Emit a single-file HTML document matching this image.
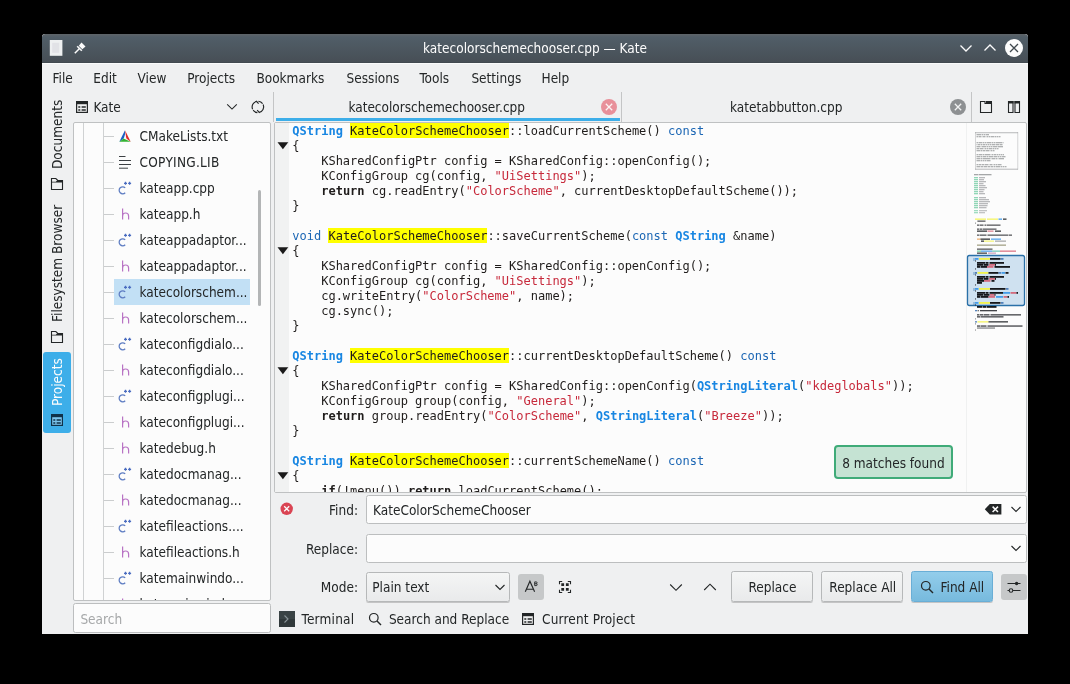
<!DOCTYPE html>
<html><head><meta charset="utf-8"><title>Kate</title><style>
*{box-sizing:border-box;margin:0;padding:0}
html,body{width:1070px;height:684px;overflow:hidden;background:#000}
body{position:relative;font-family:"DejaVu Sans Condensed","Liberation Sans","DejaVu Sans",sans-serif;font-size:13.5px;color:#232627}
#root{position:absolute;left:0;top:0;width:1070px;height:684px;will-change:transform}
.a{position:absolute}
.t{position:absolute;white-space:nowrap;line-height:20px;height:20px}
#win{left:42px;top:34px;width:986px;height:600px;background:#eff0f1;border-radius:3px 3px 0 0;overflow:hidden}
#tb{left:0;top:0;width:986px;height:29px;background:linear-gradient(#5e6468 0,#5a6268 1px,#515e68 3px,#474f56 27.5px,#3f474d 29px);border-radius:3px 3px 0 0}
.code{position:absolute;left:292px;white-space:pre;font-family:"DejaVu Sans Mono","Liberation Mono",monospace;font-size:12px;line-height:15px;height:15px;color:#1f1c1b}
.code b{font-weight:bold}
.ty{color:#1886e2;font-weight:bold}
.kw{color:#1b66b4}
.st{color:#c7293b}
.hl{}
.hb{position:absolute;height:15px;background:#ffff00}
.row{position:absolute;left:139.5px;white-space:nowrap;height:26px;line-height:26px}
.br{position:absolute;left:104px;width:10px;height:1px;background:#cbcdce}
.btn{position:absolute;border:1px solid #b6b8b9;border-radius:2.5px;background:linear-gradient(#f4f5f5,#e9eaeb);box-shadow:0 1px 0 rgba(0,0,0,.18)}
.inp{position:absolute;border:1px solid #bcbebf;border-radius:2.5px;background:#fcfcfc}
</style></head><body>
<div id="root">
<div id="win" class="a"><div id="tb" class="a"></div><div class="a" style="left:0;top:29px;width:986px;height:1px;background:#f9fafa"></div></div>
<div class="t" style="left:335px;width:400px;text-align:center;top:38px;color:#fcfcfc">katecolorschemechooser.cpp — Kate</div>
<svg class="a" style="left:49px;top:39px" width="16" height="18" viewBox="0 0 16 18"><rect x="0.8" y="1" width="12.6" height="15.8" fill="#eef0f1"/><rect x="3.2" y="3.8" width="7" height="10" fill="#e1e2e6"/></svg>
<svg class="a" style="left:72px;top:40px" width="16" height="16" viewBox="0 0 16 16"><path d="M9.5 2.5 L13.5 6.5 L10.3 9.2 L6.8 5.7 Z" fill="#fcfcfc"/><path d="M5.2 6.2 L9.8 10.8" stroke="#fcfcfc" stroke-width="1.6"/><path d="M7.5 8.5 L2.8 13.2" stroke="#fcfcfc" stroke-width="1.5"/></svg>
<svg class="a" style="left:956px;top:38px" width="70" height="20" viewBox="0 0 70 20"><path d="M4.5 7.5 L10 13 L15.5 7.5" fill="none" stroke="#fcfcfc" stroke-width="1.3"/><path d="M28.5 12.5 L34 7 L39.5 12.5" fill="none" stroke="#fcfcfc" stroke-width="1.3"/><circle cx="58" cy="10" r="9" fill="#fcfcfc"/><path d="M54 6 L62 14 M62 6 L54 14" stroke="#3f474d" stroke-width="1.3"/></svg>
<div class="t" style="left:52.6px;top:68px">File</div>
<div class="t" style="left:93.3px;top:68px">Edit</div>
<div class="t" style="left:137.6px;top:68px">View</div>
<div class="t" style="left:187.2px;top:68px">Projects</div>
<div class="t" style="left:256.4px;top:68px">Bookmarks</div>
<div class="t" style="left:346.6px;top:68px">Sessions</div>
<div class="t" style="left:419.5px;top:68px">Tools</div>
<div class="t" style="left:471.4px;top:68px">Settings</div>
<div class="t" style="left:541.5px;top:68px">Help</div>
<div class="a" style="left:43px;top:352px;width:28px;height:81px;background:#3daee9;border-radius:3px"></div>
<div class="t" style="left:57px;top:169px;transform-origin:0 0;transform:rotate(-90deg) translateY(-10px);color:#232627">Documents</div>
<div class="t" style="left:57px;top:321.5px;transform-origin:0 0;transform:rotate(-90deg) translateY(-10px);color:#232627">Filesystem Browser</div>
<div class="t" style="left:57px;top:405.5px;transform-origin:0 0;transform:rotate(-90deg) translateY(-10px);color:#fcfcfc">Projects</div>
<svg class="a" style="left:49px;top:176px" width="16" height="16" viewBox="0 0 16 16"><path d="M2.5 2.5 H6.8 L8.8 4.5 H13.5 V13.5 H2.5 Z" fill="none" stroke="#232627" stroke-width="1.1"/><path d="M8.6 4 H14 V6.6 H2 V5.8 H6.8 Z" fill="#232627"/></svg>
<svg class="a" style="left:49px;top:329px" width="16" height="16" viewBox="0 0 16 16"><path d="M2.5 2.5 H6.8 L8.8 4.5 H13.5 V13.5 H2.5 Z" fill="none" stroke="#232627" stroke-width="1.1"/><path d="M8.6 4 H14 V6.6 H2 V5.8 H6.8 Z" fill="#232627"/></svg>
<svg class="a" style="left:49px;top:412px" width="16" height="16" viewBox="0 0 16 16"><rect x="2.6" y="2.6" width="10.8" height="10.8" fill="#7cc4ec" stroke="#10324a" stroke-width="1.2"/><rect x="2" y="2" width="12" height="3.2" fill="#10324a"/><path d="M4.3 8h2M7.6 8h4.2M4.3 11h2M7.6 11h4.2" stroke="#10324a" stroke-width="1.5"/></svg>
<svg class="a" style="left:74px;top:99px" width="16" height="16" viewBox="0 0 16 16"><rect x="2.6" y="2.6" width="10.8" height="10.8" fill="none" stroke="#232627" stroke-width="1.2"/><rect x="2" y="2" width="12" height="3.2" fill="#232627"/><path d="M4.3 8h2M7.6 8h4.2M4.3 11h2M7.6 11h4.2" stroke="#232627" stroke-width="1.5"/></svg>
<div class="t" style="left:93.4px;top:97px">Kate</div>
<svg class="a" style="left:224px;top:99px" width="16" height="16" viewBox="0 0 16 16"><path d="M3.2 5.4 L8 10.1 L12.8 5.4" fill="none" stroke="#232627" stroke-width="1.1"/></svg>
<svg class="a" style="left:250px;top:99px" width="16" height="16" viewBox="0 0 16 16"><path d="M2.6 10.2 A5.7 5.7 0 0 1 6.6 2.4" fill="none" stroke="#232627" stroke-width="1.15"/><path d="M13.2 5.6 A5.7 5.7 0 0 1 9.2 13.4" fill="none" stroke="#232627" stroke-width="1.15"/><path d="M8.4 2.2 A5.7 5.7 0 0 1 12.6 4.6" fill="none" stroke="#232627" stroke-width="1.15"/><path d="M7.4 13.6 A5.7 5.7 0 0 1 3.2 11.2" fill="none" stroke="#232627" stroke-width="1.15"/><path d="M6.2 2 L8.6 4.6 M9.6 13.8 L7.2 11.2" stroke="#232627" stroke-width="1.15"/></svg>
<div class="a" style="left:73px;top:122px;width:198px;height:479px;background:#fcfcfc;border:1px solid #bfc1c2;border-radius:2px;overflow:hidden"></div>
<div class="a" style="left:83px;top:123px;width:1px;height:477px;background:#d0d2d3"></div>
<div class="a" style="left:103px;top:123px;width:1px;height:477px;background:#d0d2d3"></div>
<div class="a" style="left:114px;top:279px;width:136px;height:26px;background:#c2e0f5"></div>
<div class="a" style="left:258px;top:190px;width:3px;height:116px;background:#b3b5b6;border-radius:1.5px"></div>
<div class="a" style="left:74px;top:124px;width:196px;height:476px;overflow:hidden">
<div class="br" style="left:30px;top:12px"></div>
<svg class="a" style="left:43px;top:4px" width="16" height="16" viewBox="0 0 16 16"><path d="M8 2.3 L2.3 13.8 L8 9.6 Z" fill="#1b5fc4"/><path d="M8 2.3 L13.7 13.8 L9.3 10.4 Z" fill="#dd2a2a"/><path d="M2.3 13.8 L13.7 13.8 L6.6 10.6 Z" fill="#34b233"/><path d="M8 6.5 L9.4 10.4 L6.7 10.4 Z" fill="#f4f4f4"/></svg>
<div class="row" style="left:65.5px;top:-1px">CMakeLists.txt</div>
<div class="br" style="left:30px;top:38px"></div>
<svg class="a" style="left:43px;top:30px" width="16" height="16" viewBox="0 0 16 16"><path d="M2 2.5 H8.5 M2 6.5 H14 M2 10.5 H14 M2 14.2 H11" stroke="#3c4043" stroke-width="1"/></svg>
<div class="row" style="left:65.5px;top:25px;letter-spacing:.27px">COPYING.LIB</div>
<div class="br" style="left:30px;top:64px"></div>
<svg class="a" style="left:43px;top:56px" width="16" height="16" viewBox="0 0 16 16"><path d="M8.2 7.9 A3.5 3.5 0 1 0 8.2 12.7" fill="none" stroke="#5d7cc2" stroke-width="1.25"/><path d="M8.5 1.8 V4.8 M7 3.3 H10 M12.6 1.8 V4.8 M11.1 3.3 H14.1" stroke="#4a6cc0" stroke-width="1.3"/></svg>
<div class="row" style="left:65.5px;top:51px">kateapp.cpp</div>
<div class="br" style="left:30px;top:90px"></div>
<svg class="a" style="left:43px;top:82px" width="16" height="16" viewBox="0 0 16 16"><path d="M5.6 2.6 V13.6 M5.6 10 A3 3 0 0 1 11.6 10 V13.6" fill="none" stroke="#b873c4" stroke-width="1.2"/></svg>
<div class="row" style="left:65.5px;top:77px">kateapp.h</div>
<div class="br" style="left:30px;top:116px"></div>
<svg class="a" style="left:43px;top:108px" width="16" height="16" viewBox="0 0 16 16"><path d="M8.2 7.9 A3.5 3.5 0 1 0 8.2 12.7" fill="none" stroke="#5d7cc2" stroke-width="1.25"/><path d="M8.5 1.8 V4.8 M7 3.3 H10 M12.6 1.8 V4.8 M11.1 3.3 H14.1" stroke="#4a6cc0" stroke-width="1.3"/></svg>
<div class="row" style="left:65.5px;top:103px">kateappadaptor...</div>
<div class="br" style="left:30px;top:142px"></div>
<svg class="a" style="left:43px;top:134px" width="16" height="16" viewBox="0 0 16 16"><path d="M5.6 2.6 V13.6 M5.6 10 A3 3 0 0 1 11.6 10 V13.6" fill="none" stroke="#b873c4" stroke-width="1.2"/></svg>
<div class="row" style="left:65.5px;top:129px">kateappadaptor...</div>
<div class="br" style="left:30px;top:168px"></div>
<svg class="a" style="left:43px;top:160px" width="16" height="16" viewBox="0 0 16 16"><path d="M8.2 7.9 A3.5 3.5 0 1 0 8.2 12.7" fill="none" stroke="#5d7cc2" stroke-width="1.25"/><path d="M8.5 1.8 V4.8 M7 3.3 H10 M12.6 1.8 V4.8 M11.1 3.3 H14.1" stroke="#4a6cc0" stroke-width="1.3"/></svg>
<div class="row" style="left:65.5px;top:155px">katecolorschem...</div>
<div class="br" style="left:30px;top:194px"></div>
<svg class="a" style="left:43px;top:186px" width="16" height="16" viewBox="0 0 16 16"><path d="M5.6 2.6 V13.6 M5.6 10 A3 3 0 0 1 11.6 10 V13.6" fill="none" stroke="#b873c4" stroke-width="1.2"/></svg>
<div class="row" style="left:65.5px;top:181px">katecolorschem...</div>
<div class="br" style="left:30px;top:220px"></div>
<svg class="a" style="left:43px;top:212px" width="16" height="16" viewBox="0 0 16 16"><path d="M8.2 7.9 A3.5 3.5 0 1 0 8.2 12.7" fill="none" stroke="#5d7cc2" stroke-width="1.25"/><path d="M8.5 1.8 V4.8 M7 3.3 H10 M12.6 1.8 V4.8 M11.1 3.3 H14.1" stroke="#4a6cc0" stroke-width="1.3"/></svg>
<div class="row" style="left:65.5px;top:207px">kateconfigdialo...</div>
<div class="br" style="left:30px;top:246px"></div>
<svg class="a" style="left:43px;top:238px" width="16" height="16" viewBox="0 0 16 16"><path d="M5.6 2.6 V13.6 M5.6 10 A3 3 0 0 1 11.6 10 V13.6" fill="none" stroke="#b873c4" stroke-width="1.2"/></svg>
<div class="row" style="left:65.5px;top:233px">kateconfigdialo...</div>
<div class="br" style="left:30px;top:272px"></div>
<svg class="a" style="left:43px;top:264px" width="16" height="16" viewBox="0 0 16 16"><path d="M8.2 7.9 A3.5 3.5 0 1 0 8.2 12.7" fill="none" stroke="#5d7cc2" stroke-width="1.25"/><path d="M8.5 1.8 V4.8 M7 3.3 H10 M12.6 1.8 V4.8 M11.1 3.3 H14.1" stroke="#4a6cc0" stroke-width="1.3"/></svg>
<div class="row" style="left:65.5px;top:259px">kateconfigplugi...</div>
<div class="br" style="left:30px;top:298px"></div>
<svg class="a" style="left:43px;top:290px" width="16" height="16" viewBox="0 0 16 16"><path d="M5.6 2.6 V13.6 M5.6 10 A3 3 0 0 1 11.6 10 V13.6" fill="none" stroke="#b873c4" stroke-width="1.2"/></svg>
<div class="row" style="left:65.5px;top:285px">kateconfigplugi...</div>
<div class="br" style="left:30px;top:324px"></div>
<svg class="a" style="left:43px;top:316px" width="16" height="16" viewBox="0 0 16 16"><path d="M5.6 2.6 V13.6 M5.6 10 A3 3 0 0 1 11.6 10 V13.6" fill="none" stroke="#b873c4" stroke-width="1.2"/></svg>
<div class="row" style="left:65.5px;top:311px">katedebug.h</div>
<div class="br" style="left:30px;top:350px"></div>
<svg class="a" style="left:43px;top:342px" width="16" height="16" viewBox="0 0 16 16"><path d="M8.2 7.9 A3.5 3.5 0 1 0 8.2 12.7" fill="none" stroke="#5d7cc2" stroke-width="1.25"/><path d="M8.5 1.8 V4.8 M7 3.3 H10 M12.6 1.8 V4.8 M11.1 3.3 H14.1" stroke="#4a6cc0" stroke-width="1.3"/></svg>
<div class="row" style="left:65.5px;top:337px">katedocmanag...</div>
<div class="br" style="left:30px;top:376px"></div>
<svg class="a" style="left:43px;top:368px" width="16" height="16" viewBox="0 0 16 16"><path d="M5.6 2.6 V13.6 M5.6 10 A3 3 0 0 1 11.6 10 V13.6" fill="none" stroke="#b873c4" stroke-width="1.2"/></svg>
<div class="row" style="left:65.5px;top:363px">katedocmanag...</div>
<div class="br" style="left:30px;top:402px"></div>
<svg class="a" style="left:43px;top:394px" width="16" height="16" viewBox="0 0 16 16"><path d="M8.2 7.9 A3.5 3.5 0 1 0 8.2 12.7" fill="none" stroke="#5d7cc2" stroke-width="1.25"/><path d="M8.5 1.8 V4.8 M7 3.3 H10 M12.6 1.8 V4.8 M11.1 3.3 H14.1" stroke="#4a6cc0" stroke-width="1.3"/></svg>
<div class="row" style="left:65.5px;top:389px">katefileactions....</div>
<div class="br" style="left:30px;top:428px"></div>
<svg class="a" style="left:43px;top:420px" width="16" height="16" viewBox="0 0 16 16"><path d="M5.6 2.6 V13.6 M5.6 10 A3 3 0 0 1 11.6 10 V13.6" fill="none" stroke="#b873c4" stroke-width="1.2"/></svg>
<div class="row" style="left:65.5px;top:415px">katefileactions.h</div>
<div class="br" style="left:30px;top:454px"></div>
<svg class="a" style="left:43px;top:446px" width="16" height="16" viewBox="0 0 16 16"><path d="M8.2 7.9 A3.5 3.5 0 1 0 8.2 12.7" fill="none" stroke="#5d7cc2" stroke-width="1.25"/><path d="M8.5 1.8 V4.8 M7 3.3 H10 M12.6 1.8 V4.8 M11.1 3.3 H14.1" stroke="#4a6cc0" stroke-width="1.3"/></svg>
<div class="row" style="left:65.5px;top:441px">katemainwindo...</div>
<div class="br" style="left:30px;top:480px"></div>
<svg class="a" style="left:43px;top:472px" width="16" height="16" viewBox="0 0 16 16"><path d="M5.6 2.6 V13.6 M5.6 10 A3 3 0 0 1 11.6 10 V13.6" fill="none" stroke="#b873c4" stroke-width="1.2"/></svg>
<div class="row" style="left:65.5px;top:467px">katemainwindo...</div>
</div>
<div class="inp" style="left:73px;top:603px;width:198px;height:30px"></div>
<div class="t" style="left:80.4px;top:608.5px;color:#a6a8a9">Search</div>
<div class="a" style="left:273px;top:92px;width:1px;height:30px;background:#c4c5c6"></div>
<div class="a" style="left:621px;top:92px;width:1px;height:30px;background:#c4c5c6"></div>
<div class="a" style="left:971px;top:92px;width:1px;height:30px;background:#c4c5c6"></div>
<div class="a" style="left:276px;top:118px;width:344px;height:3px;background:#3daee9"></div>
<div class="t" style="left:348.4px;top:97px">katecolorschemechooser.cpp</div>
<div class="t" style="left:730px;top:97px">katetabbutton.cpp</div>
<svg class="a" style="left:600px;top:98px" width="18" height="18" viewBox="0 0 18 18"><circle cx="9" cy="9" r="8" fill="#e8909a"/><path d="M5.8 5.8 L12.2 12.2 M12.2 5.8 L5.8 12.2" stroke="#fdf3f4" stroke-width="1.3"/></svg>
<svg class="a" style="left:949px;top:98px" width="18" height="18" viewBox="0 0 18 18"><circle cx="9" cy="9" r="8" fill="#8d9092"/><path d="M5.8 5.8 L12.2 12.2 M12.2 5.8 L5.8 12.2" stroke="#f1f2f2" stroke-width="1.3"/></svg>
<svg class="a" style="left:978px;top:99px" width="16" height="16" viewBox="0 0 16 16"><path d="M2.5 2.5 H7 V4.5 H13.5 V13.5 H2.5 Z" fill="none" stroke="#232627" stroke-width="1.1"/><path d="M8 2 H14 V5 H8 Z" fill="#232627"/></svg>
<svg class="a" style="left:1006px;top:99px" width="16" height="16" viewBox="0 0 16 16"><path d="M2.5 2.5 H7 V13.5 H2.5 Z M9 2.5 H13.5 V13.5 H9 Z" fill="none" stroke="#232627" stroke-width="1.1"/><path d="M2 2 H7.5 V4.5 H2 Z M8.5 2 H14 V4.5 H8.5 Z" fill="#232627"/></svg>
<div class="a" style="left:274px;top:122px;width:753px;height:371px;background:#fcfcfc;border:1px solid #bfc1c2;border-radius:2px"></div>
<div class="a" style="left:275px;top:123px;width:14px;height:369px;background:#f1f2f2"></div>
<div class="a" style="left:966px;top:123px;width:1px;height:369px;background:#f0f1f1"></div>
<div class="a" style="left:275px;top:123px;width:691px;height:369px;overflow:hidden">
<div class="hb" style="left:74.6px;top:0px;width:159.5px"></div>
<div class="hb" style="left:52.9px;top:105px;width:159.4px"></div>
<div class="hb" style="left:74.6px;top:225px;width:159.5px"></div>
<div class="hb" style="left:74.6px;top:330px;width:159.5px"></div>
<div class="code" style="left:17.3px;top:1px"><span class="ty">QString</span> <span class="hl">KateColorSchemeChooser</span>::loadCurrentScheme() <span class="kw">const</span></div>
<div class="code" style="left:17.3px;top:16px">{</div>
<div class="code" style="left:17.3px;top:31px">    KSharedConfigPtr config = KSharedConfig::openConfig();</div>
<div class="code" style="left:17.3px;top:46px">    KConfigGroup cg(config, <span class="st">&quot;UiSettings&quot;</span>);</div>
<div class="code" style="left:17.3px;top:61px">    <b>return</b> cg.readEntry(<span class="st">&quot;ColorScheme&quot;</span>, currentDesktopDefaultScheme());</div>
<div class="code" style="left:17.3px;top:76px">}</div>
<div class="code" style="left:17.3px;top:106px"><span class="kw">void</span> <span class="hl">KateColorSchemeChooser</span>::saveCurrentScheme(<span class="kw">const</span> <span class="ty">QString</span> &amp;name)</div>
<div class="code" style="left:17.3px;top:121px">{</div>
<div class="code" style="left:17.3px;top:136px">    KSharedConfigPtr config = KSharedConfig::openConfig();</div>
<div class="code" style="left:17.3px;top:151px">    KConfigGroup cg(config, <span class="st">&quot;UiSettings&quot;</span>);</div>
<div class="code" style="left:17.3px;top:166px">    cg.writeEntry(<span class="st">&quot;ColorScheme&quot;</span>, name);</div>
<div class="code" style="left:17.3px;top:181px">    cg.sync();</div>
<div class="code" style="left:17.3px;top:196px">}</div>
<div class="code" style="left:17.3px;top:226px"><span class="ty">QString</span> <span class="hl">KateColorSchemeChooser</span>::currentDesktopDefaultScheme() <span class="kw">const</span></div>
<div class="code" style="left:17.3px;top:241px">{</div>
<div class="code" style="left:17.3px;top:256px">    KSharedConfigPtr config = KSharedConfig::openConfig(<span class="ty">QStringLiteral</span>(<span class="st">&quot;kdeglobals&quot;</span>));</div>
<div class="code" style="left:17.3px;top:271px">    KConfigGroup group(config, <span class="st">&quot;General&quot;</span>);</div>
<div class="code" style="left:17.3px;top:286px">    <b>return</b> group.readEntry(<span class="st">&quot;ColorScheme&quot;</span>, <span class="ty">QStringLiteral</span>(<span class="st">&quot;Breeze&quot;</span>));</div>
<div class="code" style="left:17.3px;top:301px">}</div>
<div class="code" style="left:17.3px;top:331px"><span class="ty">QString</span> <span class="hl">KateColorSchemeChooser</span>::currentSchemeName() <span class="kw">const</span></div>
<div class="code" style="left:17.3px;top:346px">{</div>
<div class="code" style="left:17.3px;top:361px">    <b>if</b>(!menu()) <b>return</b> loadCurrentScheme();</div>
<svg class="a" style="left:2px;top:19px" width="12" height="8" viewBox="0 0 12 8"><path d="M0.5 0.3 H11.3 L5.9 7.3 Z" fill="#1a1a1a"/></svg>
<svg class="a" style="left:2px;top:124px" width="12" height="8" viewBox="0 0 12 8"><path d="M0.5 0.3 H11.3 L5.9 7.3 Z" fill="#1a1a1a"/></svg>
<svg class="a" style="left:2px;top:244px" width="12" height="8" viewBox="0 0 12 8"><path d="M0.5 0.3 H11.3 L5.9 7.3 Z" fill="#1a1a1a"/></svg>
<svg class="a" style="left:2px;top:349px" width="12" height="8" viewBox="0 0 12 8"><path d="M0.5 0.3 H11.3 L5.9 7.3 Z" fill="#1a1a1a"/></svg>
</div>
<div class="a" style="left:834px;top:445px;width:119px;height:34px;background:#c5e3d3;border:2px solid #3fab78;border-radius:4px"></div>
<div class="t" style="left:842.2px;top:452.5px">8 matches found</div>
<svg class="a" style="left:0;top:0" width="1070" height="684" viewBox="0 0 1070 684"><rect x="975.0" y="132.0" width="43.0" height="1.3" fill="#9b9d9f" opacity="0.55"/><rect x="975.0" y="168.6" width="43.0" height="1.3" fill="#9b9d9f" opacity="0.55"/><rect x="975.0" y="132" width="0.8" height="37.5" fill="#9b9d9f" opacity=".5"/><rect x="1017.4" y="132" width="0.8" height="37.5" fill="#9b9d9f" opacity=".5"/><rect x="976.5" y="134.0" width="4.5" height="1.3" fill="#9b9d9f" opacity="0.8"/><rect x="981.5" y="134.0" width="1.5" height="1.3" fill="#9b9d9f" opacity="0.8"/><rect x="983.5" y="134.0" width="2.0" height="1.3" fill="#9b9d9f" opacity="0.8"/><rect x="986.0" y="134.0" width="3.0" height="1.3" fill="#9b9d9f" opacity="0.8"/><rect x="976.5" y="136.0" width="2.0" height="1.3" fill="#9b9d9f" opacity="0.8"/><rect x="979.0" y="136.0" width="2.0" height="1.3" fill="#9b9d9f" opacity="0.8"/><rect x="981.5" y="136.0" width="1.0" height="1.3" fill="#9b9d9f" opacity="0.8"/><rect x="983.0" y="136.0" width="2.0" height="1.3" fill="#9b9d9f" opacity="0.8"/><rect x="985.5" y="136.0" width="1.0" height="1.3" fill="#9b9d9f" opacity="0.8"/><rect x="987.0" y="136.0" width="1.5" height="1.3" fill="#9b9d9f" opacity="0.8"/><rect x="989.0" y="136.0" width="1.5" height="1.3" fill="#9b9d9f" opacity="0.8"/><rect x="991.0" y="136.0" width="3.5" height="1.3" fill="#9b9d9f" opacity="0.8"/><rect x="995.0" y="136.0" width="1.5" height="1.3" fill="#9b9d9f" opacity="0.8"/><rect x="997.0" y="136.0" width="1.5" height="1.3" fill="#9b9d9f" opacity="0.8"/><rect x="999.0" y="136.0" width="1.5" height="1.3" fill="#9b9d9f" opacity="0.8"/><rect x="976.5" y="142.0" width="2.0" height="1.3" fill="#9b9d9f" opacity="0.8"/><rect x="979.0" y="142.0" width="3.5" height="1.3" fill="#9b9d9f" opacity="0.8"/><rect x="983.0" y="142.0" width="1.0" height="1.3" fill="#9b9d9f" opacity="0.8"/><rect x="984.5" y="142.0" width="2.0" height="1.3" fill="#9b9d9f" opacity="0.8"/><rect x="987.0" y="142.0" width="4.5" height="1.3" fill="#9b9d9f" opacity="0.8"/><rect x="992.0" y="142.0" width="1.5" height="1.3" fill="#9b9d9f" opacity="0.8"/><rect x="994.0" y="142.0" width="1.5" height="1.3" fill="#9b9d9f" opacity="0.8"/><rect x="996.0" y="142.0" width="6.0" height="1.3" fill="#9b9d9f" opacity="0.8"/><rect x="1002.5" y="142.0" width="1.0" height="1.3" fill="#9b9d9f" opacity="0.8"/><rect x="976.5" y="144.0" width="1.0" height="1.3" fill="#9b9d9f" opacity="0.8"/><rect x="978.0" y="144.0" width="2.5" height="1.3" fill="#9b9d9f" opacity="0.8"/><rect x="981.0" y="144.0" width="1.5" height="1.3" fill="#9b9d9f" opacity="0.8"/><rect x="983.0" y="144.0" width="2.5" height="1.3" fill="#9b9d9f" opacity="0.8"/><rect x="986.0" y="144.0" width="1.0" height="1.3" fill="#9b9d9f" opacity="0.8"/><rect x="987.5" y="144.0" width="1.5" height="1.3" fill="#9b9d9f" opacity="0.8"/><rect x="989.5" y="144.0" width="1.5" height="1.3" fill="#9b9d9f" opacity="0.8"/><rect x="991.5" y="144.0" width="3.5" height="1.3" fill="#9b9d9f" opacity="0.8"/><rect x="995.5" y="144.0" width="3.5" height="1.3" fill="#9b9d9f" opacity="0.8"/><rect x="999.5" y="144.0" width="3.0" height="1.3" fill="#9b9d9f" opacity="0.8"/><rect x="976.5" y="146.0" width="3.5" height="1.3" fill="#9b9d9f" opacity="0.8"/><rect x="980.5" y="146.0" width="1.0" height="1.3" fill="#9b9d9f" opacity="0.8"/><rect x="982.0" y="146.0" width="4.5" height="1.3" fill="#9b9d9f" opacity="0.8"/><rect x="987.0" y="146.0" width="1.0" height="1.3" fill="#9b9d9f" opacity="0.8"/><rect x="988.5" y="146.0" width="1.5" height="1.3" fill="#9b9d9f" opacity="0.8"/><rect x="990.5" y="146.0" width="2.0" height="1.3" fill="#9b9d9f" opacity="0.8"/><rect x="993.0" y="146.0" width="4.0" height="1.3" fill="#9b9d9f" opacity="0.8"/><rect x="997.5" y="146.0" width="5.5" height="1.3" fill="#9b9d9f" opacity="0.8"/><rect x="976.5" y="148.0" width="3.0" height="1.3" fill="#9b9d9f" opacity="0.8"/><rect x="980.0" y="148.0" width="3.5" height="1.3" fill="#9b9d9f" opacity="0.8"/><rect x="984.0" y="148.0" width="0.5" height="1.3" fill="#9b9d9f" opacity="0.8"/><rect x="985.0" y="148.0" width="1.0" height="1.3" fill="#9b9d9f" opacity="0.8"/><rect x="986.5" y="148.0" width="1.5" height="1.3" fill="#9b9d9f" opacity="0.8"/><rect x="988.5" y="148.0" width="4.0" height="1.3" fill="#9b9d9f" opacity="0.8"/><rect x="993.0" y="148.0" width="1.0" height="1.3" fill="#9b9d9f" opacity="0.8"/><rect x="994.5" y="148.0" width="1.5" height="1.3" fill="#9b9d9f" opacity="0.8"/><rect x="996.5" y="148.0" width="2.0" height="1.3" fill="#9b9d9f" opacity="0.8"/><rect x="976.5" y="150.0" width="3.5" height="1.3" fill="#9b9d9f" opacity="0.8"/><rect x="980.5" y="150.0" width="1.5" height="1.3" fill="#9b9d9f" opacity="0.8"/><rect x="982.5" y="150.0" width="2.5" height="1.3" fill="#9b9d9f" opacity="0.8"/><rect x="985.5" y="150.0" width="3.5" height="1.3" fill="#9b9d9f" opacity="0.8"/><rect x="989.5" y="150.0" width="1.0" height="1.3" fill="#9b9d9f" opacity="0.8"/><rect x="991.0" y="150.0" width="1.0" height="1.3" fill="#9b9d9f" opacity="0.8"/><rect x="992.5" y="150.0" width="2.0" height="1.3" fill="#9b9d9f" opacity="0.8"/><rect x="976.5" y="154.0" width="2.0" height="1.3" fill="#9b9d9f" opacity="0.8"/><rect x="979.0" y="154.0" width="3.5" height="1.3" fill="#9b9d9f" opacity="0.8"/><rect x="983.0" y="154.0" width="1.0" height="1.3" fill="#9b9d9f" opacity="0.8"/><rect x="984.5" y="154.0" width="5.5" height="1.3" fill="#9b9d9f" opacity="0.8"/><rect x="990.5" y="154.0" width="1.0" height="1.3" fill="#9b9d9f" opacity="0.8"/><rect x="992.0" y="154.0" width="1.5" height="1.3" fill="#9b9d9f" opacity="0.8"/><rect x="994.0" y="154.0" width="2.0" height="1.3" fill="#9b9d9f" opacity="0.8"/><rect x="996.5" y="154.0" width="2.0" height="1.3" fill="#9b9d9f" opacity="0.8"/><rect x="999.0" y="154.0" width="1.0" height="1.3" fill="#9b9d9f" opacity="0.8"/><rect x="1000.5" y="154.0" width="2.0" height="1.3" fill="#9b9d9f" opacity="0.8"/><rect x="1003.0" y="154.0" width="1.0" height="1.3" fill="#9b9d9f" opacity="0.8"/><rect x="976.5" y="156.0" width="3.5" height="1.3" fill="#9b9d9f" opacity="0.8"/><rect x="980.5" y="156.0" width="1.5" height="1.3" fill="#9b9d9f" opacity="0.8"/><rect x="982.5" y="156.0" width="3.5" height="1.3" fill="#9b9d9f" opacity="0.8"/><rect x="986.5" y="156.0" width="1.5" height="1.3" fill="#9b9d9f" opacity="0.8"/><rect x="988.5" y="156.0" width="4.5" height="1.3" fill="#9b9d9f" opacity="0.8"/><rect x="993.5" y="156.0" width="3.5" height="1.3" fill="#9b9d9f" opacity="0.8"/><rect x="997.5" y="156.0" width="2.0" height="1.3" fill="#9b9d9f" opacity="0.8"/><rect x="1000.0" y="156.0" width="1.5" height="1.3" fill="#9b9d9f" opacity="0.8"/><rect x="1002.0" y="156.0" width="3.5" height="1.3" fill="#9b9d9f" opacity="0.8"/><rect x="976.5" y="158.0" width="4.0" height="1.3" fill="#9b9d9f" opacity="0.8"/><rect x="981.0" y="158.0" width="1.0" height="1.3" fill="#9b9d9f" opacity="0.8"/><rect x="982.5" y="158.0" width="7.5" height="1.3" fill="#9b9d9f" opacity="0.8"/><rect x="990.5" y="158.0" width="1.0" height="1.3" fill="#9b9d9f" opacity="0.8"/><rect x="992.0" y="158.0" width="3.5" height="1.3" fill="#9b9d9f" opacity="0.8"/><rect x="996.0" y="158.0" width="1.5" height="1.3" fill="#9b9d9f" opacity="0.8"/><rect x="998.0" y="158.0" width="0.5" height="1.3" fill="#9b9d9f" opacity="0.8"/><rect x="999.0" y="158.0" width="5.0" height="1.3" fill="#9b9d9f" opacity="0.8"/><rect x="976.5" y="160.0" width="4.0" height="1.3" fill="#9b9d9f" opacity="0.8"/><rect x="981.0" y="160.0" width="1.5" height="1.3" fill="#9b9d9f" opacity="0.8"/><rect x="983.0" y="160.0" width="1.5" height="1.3" fill="#9b9d9f" opacity="0.8"/><rect x="985.0" y="160.0" width="1.5" height="1.3" fill="#9b9d9f" opacity="0.8"/><rect x="987.0" y="160.0" width="3.5" height="1.3" fill="#9b9d9f" opacity="0.8"/><rect x="976.5" y="164.0" width="1.5" height="1.3" fill="#9b9d9f" opacity="0.8"/><rect x="978.5" y="164.0" width="3.0" height="1.3" fill="#9b9d9f" opacity="0.8"/><rect x="982.0" y="164.0" width="2.0" height="1.3" fill="#9b9d9f" opacity="0.8"/><rect x="984.5" y="164.0" width="4.0" height="1.3" fill="#9b9d9f" opacity="0.8"/><rect x="989.0" y="164.0" width="0.5" height="1.3" fill="#9b9d9f" opacity="0.8"/><rect x="990.0" y="164.0" width="2.0" height="1.3" fill="#9b9d9f" opacity="0.8"/><rect x="992.5" y="164.0" width="1.0" height="1.3" fill="#9b9d9f" opacity="0.8"/><rect x="994.0" y="164.0" width="1.5" height="1.3" fill="#9b9d9f" opacity="0.8"/><rect x="996.0" y="164.0" width="1.5" height="1.3" fill="#9b9d9f" opacity="0.8"/><rect x="998.0" y="164.0" width="3.5" height="1.3" fill="#9b9d9f" opacity="0.8"/><rect x="976.5" y="166.0" width="3.5" height="1.3" fill="#9b9d9f" opacity="0.8"/><rect x="980.5" y="166.0" width="3.0" height="1.3" fill="#9b9d9f" opacity="0.8"/><rect x="984.0" y="166.0" width="3.5" height="1.3" fill="#9b9d9f" opacity="0.8"/><rect x="988.0" y="166.0" width="2.5" height="1.3" fill="#9b9d9f" opacity="0.8"/><rect x="991.0" y="166.0" width="2.0" height="1.3" fill="#9b9d9f" opacity="0.8"/><rect x="993.5" y="166.0" width="2.0" height="1.3" fill="#9b9d9f" opacity="0.8"/><rect x="996.0" y="166.0" width="4.0" height="1.3" fill="#9b9d9f" opacity="0.8"/><rect x="1000.5" y="166.0" width="1.5" height="1.3" fill="#9b9d9f" opacity="0.8"/><rect x="1002.5" y="166.0" width="1.5" height="1.3" fill="#9b9d9f" opacity="0.8"/><rect x="1004.5" y="166.0" width="2.0" height="1.3" fill="#9b9d9f" opacity="0.8"/><rect x="974.0" y="174.0" width="4.0" height="1.3" fill="#9b9d9f" opacity="0.9"/><rect x="978.5" y="174.0" width="13.0" height="1.3" fill="#9b9d9f" opacity="0.9"/><rect x="974.0" y="177.0" width="4.0" height="1.3" fill="#63c79a" opacity="0.7"/><rect x="979.0" y="177.0" width="6.0" height="1.3" fill="#9b9d9f" opacity="0.7"/><rect x="974.0" y="179.0" width="4.0" height="1.3" fill="#63c79a" opacity="0.7"/><rect x="979.0" y="179.0" width="5.0" height="1.3" fill="#9b9d9f" opacity="0.7"/><rect x="974.0" y="181.0" width="4.0" height="1.3" fill="#63c79a" opacity="0.7"/><rect x="979.0" y="181.0" width="7.0" height="1.3" fill="#9b9d9f" opacity="0.7"/><rect x="974.0" y="183.0" width="4.0" height="1.3" fill="#63c79a" opacity="0.7"/><rect x="979.0" y="183.0" width="4.5" height="1.3" fill="#9b9d9f" opacity="0.7"/><rect x="974.0" y="185.0" width="4.0" height="1.3" fill="#63c79a" opacity="0.7"/><rect x="979.0" y="185.0" width="6.5" height="1.3" fill="#9b9d9f" opacity="0.7"/><rect x="974.0" y="187.0" width="4.0" height="1.3" fill="#63c79a" opacity="0.7"/><rect x="979.0" y="187.0" width="8.0" height="1.3" fill="#9b9d9f" opacity="0.7"/><rect x="974.0" y="189.0" width="4.0" height="1.3" fill="#63c79a" opacity="0.7"/><rect x="979.0" y="189.0" width="5.5" height="1.3" fill="#9b9d9f" opacity="0.7"/><rect x="974.0" y="191.0" width="4.0" height="1.3" fill="#63c79a" opacity="0.7"/><rect x="979.0" y="191.0" width="4.5" height="1.3" fill="#9b9d9f" opacity="0.7"/><rect x="974.0" y="193.0" width="4.0" height="1.3" fill="#63c79a" opacity="0.7"/><rect x="979.0" y="193.0" width="6.0" height="1.3" fill="#9b9d9f" opacity="0.7"/><rect x="974.0" y="197.0" width="4.0" height="1.3" fill="#63c79a" opacity="0.7"/><rect x="979.0" y="197.0" width="7.0" height="1.3" fill="#9b9d9f" opacity="0.7"/><rect x="974.0" y="199.0" width="4.0" height="1.3" fill="#63c79a" opacity="0.7"/><rect x="979.0" y="199.0" width="10.0" height="1.3" fill="#9b9d9f" opacity="0.7"/><rect x="974.0" y="201.0" width="4.0" height="1.3" fill="#63c79a" opacity="0.7"/><rect x="979.0" y="201.0" width="11.0" height="1.3" fill="#9b9d9f" opacity="0.7"/><rect x="974.0" y="203.0" width="4.0" height="1.3" fill="#63c79a" opacity="0.7"/><rect x="979.0" y="203.0" width="9.0" height="1.3" fill="#9b9d9f" opacity="0.7"/><rect x="974.0" y="205.0" width="4.0" height="1.3" fill="#63c79a" opacity="0.7"/><rect x="979.0" y="205.0" width="8.5" height="1.3" fill="#9b9d9f" opacity="0.7"/><rect x="974.0" y="207.0" width="4.0" height="1.3" fill="#63c79a" opacity="0.7"/><rect x="979.0" y="207.0" width="7.5" height="1.3" fill="#9b9d9f" opacity="0.7"/><rect x="974.0" y="210.0" width="4.0" height="1.3" fill="#63c79a" opacity="0.6"/><rect x="979.0" y="210.0" width="8.0" height="1.3" fill="#9b9d9f" opacity="0.6"/><rect x="974.0" y="212.0" width="4.0" height="1.3" fill="#63c79a" opacity="0.6"/><rect x="979.0" y="212.0" width="6.0" height="1.3" fill="#9b9d9f" opacity="0.6"/><rect x="975.0" y="218.5" width="11.0" height="1.3" fill="#f3f34a" opacity="0.85"/><rect x="987.0" y="218.5" width="11.0" height="1.3" fill="#f3f34a" opacity="0.85"/><rect x="998.5" y="218.5" width="3.5" height="1.3" fill="#2d8fe6" opacity="0.85"/><rect x="1003.0" y="218.5" width="3.5" height="1.3" fill="#15171b" opacity="0.85"/><rect x="977.0" y="220.5" width="0.5" height="1.3" fill="#15171b" opacity="0.85"/><rect x="978.0" y="220.5" width="7.5" height="1.3" fill="#15171b" opacity="0.7"/><rect x="975.0" y="222.5" width="0.5" height="1.3" fill="#15171b" opacity="0.85"/><rect x="977.0" y="224.5" width="2.0" height="1.3" fill="#15171b" opacity="0.7"/><rect x="979.5" y="224.5" width="3.5" height="1.3" fill="#15171b" opacity="0.7"/><rect x="983.5" y="224.5" width="0.5" height="1.3" fill="#15171b" opacity="0.7"/><rect x="984.5" y="224.5" width="1.5" height="1.3" fill="#15171b" opacity="0.7"/><rect x="986.5" y="224.5" width="14.0" height="1.3" fill="#15171b" opacity="0.7"/><rect x="977.0" y="228.5" width="2.5" height="1.3" fill="#15171b" opacity="0.7"/><rect x="980.0" y="228.5" width="2.0" height="1.3" fill="#15171b" opacity="0.7"/><rect x="982.5" y="228.5" width="14.0" height="1.3" fill="#15171b" opacity="0.7"/><rect x="977.0" y="230.5" width="10.0" height="1.3" fill="#15171b" opacity="0.85"/><rect x="987.5" y="230.5" width="6.0" height="1.3" fill="#d4566a" opacity="0.7"/><rect x="995.0" y="230.5" width="6.0" height="1.3" fill="#15171b" opacity="0.85"/><rect x="977.0" y="234.5" width="2.0" height="1.3" fill="#15171b" opacity="0.7"/><rect x="979.5" y="234.5" width="6.5" height="1.3" fill="#15171b" opacity="0.7"/><rect x="986.5" y="234.5" width="0.5" height="1.3" fill="#15171b" opacity="0.7"/><rect x="987.5" y="234.5" width="21.0" height="1.3" fill="#15171b" opacity="0.7"/><rect x="1009.0" y="234.5" width="3.0" height="1.3" fill="#15171b" opacity="0.7"/><rect x="977.0" y="238.5" width="3.5" height="1.3" fill="#e9a35c" opacity="0.85"/><rect x="980.5" y="238.5" width="9.5" height="1.3" fill="#15171b" opacity="0.85"/><rect x="991.0" y="238.5" width="10.0" height="1.3" fill="#2d8fe6" opacity="0.8"/><rect x="981.0" y="240.5" width="3.0" height="1.3" fill="#15171b" opacity="0.85"/><rect x="984.0" y="240.5" width="10.0" height="1.3" fill="#f3f34a" opacity="0.7"/><rect x="995.0" y="240.5" width="11.0" height="1.3" fill="#9b9d9f" opacity="0.85"/><rect x="977.0" y="244.5" width="29.0" height="1.3" fill="#8f8c6a" opacity="0.8"/><rect x="977.0" y="248.5" width="15.5" height="1.3" fill="#15171b" opacity="0.7"/><rect x="977.0" y="250.5" width="4.0" height="1.3" fill="#63c79a" opacity="0.85"/><rect x="981.0" y="250.5" width="11.0" height="1.3" fill="#2d8fe6" opacity="0.8"/><rect x="992.0" y="250.5" width="8.0" height="1.3" fill="#5fbfae" opacity="0.85"/><rect x="1000.0" y="250.5" width="16.0" height="1.3" fill="#d4566a" opacity="0.8"/><rect x="977.0" y="252.5" width="10.0" height="1.3" fill="#15171b" opacity="0.8"/><rect x="988.0" y="252.5" width="8.0" height="1.3" fill="#c68fb0" opacity="0.8"/><rect x="967.5" y="255.5" width="57" height="50" rx="2" fill="#cfe1f0" stroke="#2a70a8" stroke-width="1.3"/><rect x="975.0" y="258.0" width="3.5" height="1.8" fill="#2d8fe6" opacity="0.85"/><rect x="979.0" y="258.0" width="11.0" height="1.8" fill="#f3f34a" opacity="1"/><rect x="990.0" y="258.0" width="10.5" height="1.8" fill="#15171b" opacity="1"/><rect x="1001.0" y="258.0" width="2.5" height="1.8" fill="#3b6fb0" opacity="0.85"/><rect x="975.0" y="260.0" width="0.5" height="1.8" fill="#15171b" opacity="1"/><rect x="977.0" y="262.0" width="8.0" height="1.8" fill="#15171b" opacity="1"/><rect x="985.5" y="262.0" width="3.0" height="1.8" fill="#15171b" opacity="1"/><rect x="989.0" y="262.0" width="0.5" height="1.8" fill="#15171b" opacity="1"/><rect x="990.0" y="262.0" width="14.0" height="1.8" fill="#15171b" opacity="1"/><rect x="977.0" y="264.0" width="6.0" height="1.8" fill="#15171b" opacity="1"/><rect x="983.5" y="264.0" width="5.0" height="1.8" fill="#15171b" opacity="1"/><rect x="989.0" y="264.0" width="6.0" height="1.8" fill="#d4566a" opacity="0.85"/><rect x="995.0" y="264.0" width="1.0" height="1.8" fill="#15171b" opacity="1"/><rect x="977.0" y="266.0" width="3.0" height="1.8" fill="#15171b" opacity="1"/><rect x="980.5" y="266.0" width="6.5" height="1.8" fill="#15171b" opacity="1"/><rect x="987.0" y="266.0" width="6.5" height="1.8" fill="#d4566a" opacity="0.85"/><rect x="994.5" y="266.0" width="15.5" height="1.8" fill="#15171b" opacity="1"/><rect x="975.0" y="268.0" width="0.5" height="1.8" fill="#15171b" opacity="1"/><rect x="975.0" y="272.0" width="2.0" height="1.8" fill="#3b6fb0" opacity="0.85"/><rect x="977.5" y="272.0" width="11.0" height="1.8" fill="#f3f34a" opacity="1"/><rect x="988.5" y="272.0" width="10.0" height="1.8" fill="#15171b" opacity="1"/><rect x="998.5" y="272.0" width="2.5" height="1.8" fill="#3b6fb0" opacity="0.85"/><rect x="1001.5" y="272.0" width="3.5" height="1.8" fill="#2d8fe6" opacity="0.85"/><rect x="1005.5" y="272.0" width="3.0" height="1.8" fill="#15171b" opacity="1"/><rect x="975.0" y="274.0" width="0.5" height="1.8" fill="#15171b" opacity="1"/><rect x="977.0" y="276.0" width="8.0" height="1.8" fill="#15171b" opacity="1"/><rect x="985.5" y="276.0" width="3.0" height="1.8" fill="#15171b" opacity="1"/><rect x="989.0" y="276.0" width="0.5" height="1.8" fill="#15171b" opacity="1"/><rect x="990.0" y="276.0" width="14.0" height="1.8" fill="#15171b" opacity="1"/><rect x="977.0" y="278.0" width="6.0" height="1.8" fill="#15171b" opacity="1"/><rect x="983.5" y="278.0" width="5.0" height="1.8" fill="#15171b" opacity="1"/><rect x="989.0" y="278.0" width="6.0" height="1.8" fill="#d4566a" opacity="0.85"/><rect x="995.0" y="278.0" width="1.0" height="1.8" fill="#15171b" opacity="1"/><rect x="977.0" y="280.0" width="7.0" height="1.8" fill="#15171b" opacity="1"/><rect x="984.0" y="280.0" width="6.5" height="1.8" fill="#d4566a" opacity="0.85"/><rect x="991.5" y="280.0" width="3.0" height="1.8" fill="#15171b" opacity="1"/><rect x="977.0" y="282.0" width="5.0" height="1.8" fill="#15171b" opacity="1"/><rect x="975.0" y="284.0" width="0.5" height="1.8" fill="#15171b" opacity="1"/><rect x="975.0" y="288.0" width="3.5" height="1.8" fill="#2d8fe6" opacity="0.85"/><rect x="979.0" y="288.0" width="11.0" height="1.8" fill="#f3f34a" opacity="1"/><rect x="990.0" y="288.0" width="15.5" height="1.8" fill="#15171b" opacity="1"/><rect x="1006.0" y="288.0" width="2.5" height="1.8" fill="#3b6fb0" opacity="0.85"/><rect x="975.0" y="290.0" width="0.5" height="1.8" fill="#15171b" opacity="1"/><rect x="977.0" y="292.0" width="8.0" height="1.8" fill="#15171b" opacity="1"/><rect x="985.5" y="292.0" width="3.0" height="1.8" fill="#15171b" opacity="1"/><rect x="989.0" y="292.0" width="0.5" height="1.8" fill="#15171b" opacity="1"/><rect x="990.0" y="292.0" width="13.0" height="1.8" fill="#15171b" opacity="1"/><rect x="1003.0" y="292.0" width="7.0" height="1.8" fill="#2d8fe6" opacity="0.85"/><rect x="1010.5" y="292.0" width="6.0" height="1.8" fill="#d4566a" opacity="0.85"/><rect x="1016.5" y="292.0" width="1.5" height="1.8" fill="#15171b" opacity="1"/><rect x="977.0" y="294.0" width="6.0" height="1.8" fill="#15171b" opacity="1"/><rect x="983.5" y="294.0" width="6.0" height="1.8" fill="#15171b" opacity="1"/><rect x="990.0" y="294.0" width="4.5" height="1.8" fill="#d4566a" opacity="0.85"/><rect x="994.5" y="294.0" width="1.0" height="1.8" fill="#15171b" opacity="1"/><rect x="977.0" y="296.0" width="3.0" height="1.8" fill="#15171b" opacity="1"/><rect x="980.5" y="296.0" width="8.0" height="1.8" fill="#15171b" opacity="1"/><rect x="988.5" y="296.0" width="6.5" height="1.8" fill="#d4566a" opacity="0.85"/><rect x="996.0" y="296.0" width="7.0" height="1.8" fill="#2d8fe6" opacity="0.85"/><rect x="1003.5" y="296.0" width="4.0" height="1.8" fill="#d4566a" opacity="0.85"/><rect x="1007.5" y="296.0" width="1.5" height="1.8" fill="#15171b" opacity="1"/><rect x="975.0" y="298.0" width="0.5" height="1.8" fill="#15171b" opacity="1"/><rect x="975.0" y="302.0" width="3.5" height="1.8" fill="#2d8fe6" opacity="0.85"/><rect x="979.0" y="302.0" width="11.0" height="1.8" fill="#f3f34a" opacity="1"/><rect x="990.0" y="302.0" width="10.5" height="1.8" fill="#15171b" opacity="1"/><rect x="1001.0" y="302.0" width="2.5" height="1.8" fill="#3b6fb0" opacity="0.85"/><rect x="975.0" y="304.0" width="0.5" height="1.8" fill="#15171b" opacity="1"/><rect x="977.0" y="306.0" width="5.5" height="1.8" fill="#15171b" opacity="1"/><rect x="983.0" y="306.0" width="3.0" height="1.8" fill="#15171b" opacity="1"/><rect x="986.5" y="306.0" width="10.0" height="1.8" fill="#15171b" opacity="1"/><rect x="973.6" y="258" width="0.8" height="3" fill="#2e6da6" opacity=".8"/><rect x="973.6" y="272" width="0.8" height="3" fill="#2e6da6" opacity=".8"/><rect x="973.6" y="288" width="0.8" height="3" fill="#2e6da6" opacity=".8"/><rect x="973.6" y="302" width="0.8" height="3" fill="#2e6da6" opacity=".8"/><rect x="975.0" y="310.0" width="2.0" height="1.3" fill="#3b6fb0" opacity="0.85"/><rect x="977.5" y="310.0" width="1.5" height="1.3" fill="#15171b" opacity="0.6"/><rect x="980.0" y="310.0" width="17.0" height="1.3" fill="#15171b" opacity="0.8"/><rect x="977.0" y="314.2" width="2.5" height="1.3" fill="#15171b" opacity="0.8"/><rect x="980.0" y="314.2" width="3.5" height="1.3" fill="#15171b" opacity="0.8"/><rect x="984.0" y="314.2" width="5.0" height="1.3" fill="#15171b" opacity="0.8"/><rect x="989.5" y="314.2" width="0.5" height="1.3" fill="#15171b" opacity="0.8"/><rect x="990.5" y="314.2" width="30.5" height="1.3" fill="#15171b" opacity="0.8"/><rect x="977.0" y="316.2" width="3.0" height="1.3" fill="#15171b" opacity="0.8"/><rect x="980.5" y="316.2" width="23.0" height="1.3" fill="#15171b" opacity="0.8"/><rect x="975.0" y="318.2" width="0.5" height="1.3" fill="#15171b" opacity="0.85"/><rect x="975.0" y="321.2" width="2.0" height="1.3" fill="#3b6fb0" opacity="0.85"/><rect x="977.5" y="321.2" width="11.0" height="1.3" fill="#f3f34a" opacity="0.85"/><rect x="988.5" y="321.2" width="19.5" height="1.3" fill="#15171b" opacity="0.85"/><rect x="975.0" y="323.2" width="0.5" height="1.3" fill="#15171b" opacity="0.85"/><rect x="977.0" y="325.4" width="3.5" height="1.3" fill="#15171b" opacity="0.8"/><rect x="981.0" y="325.4" width="5.0" height="1.3" fill="#15171b" opacity="0.8"/><rect x="986.5" y="325.4" width="0.5" height="1.3" fill="#15171b" opacity="0.8"/><rect x="987.5" y="325.4" width="35.0" height="1.3" fill="#15171b" opacity="0.8"/><rect x="977.0" y="327.4" width="18.0" height="1.3" fill="#15171b" opacity="0.5"/><rect x="975.0" y="329.4" width="0.5" height="1.3" fill="#15171b" opacity="0.85"/></svg>
<svg class="a" style="left:279px;top:501px" width="16" height="16" viewBox="0 0 16 16"><circle cx="7.7" cy="7.8" r="6.2" fill="#da4453"/><path d="M5.2 5.3 L10.2 10.3 M10.2 5.3 L5.2 10.3" stroke="#fcfcfc" stroke-width="1.3"/></svg>
<div class="t" style="left:258px;width:100px;text-align:right;top:499.5px">Find:</div>
<div class="t" style="left:258px;width:100px;text-align:right;top:538.5px">Replace:</div>
<div class="t" style="left:258px;width:100px;text-align:right;top:577px">Mode:</div>
<div class="inp" style="left:366px;top:495px;width:661px;height:29px"></div>
<div class="inp" style="left:366px;top:534px;width:661px;height:29px"></div>
<div class="t" style="left:373px;top:499.5px">KateColorSchemeChooser</div>
<svg class="a" style="left:1008px;top:501px" width="16" height="16" viewBox="0 0 16 16"><path d="M3.5 6 L8 10.5 L12.5 6" fill="none" stroke="#232627" stroke-width="1.1"/></svg>
<svg class="a" style="left:1008px;top:540px" width="16" height="16" viewBox="0 0 16 16"><path d="M3.5 6 L8 10.5 L12.5 6" fill="none" stroke="#232627" stroke-width="1.1"/></svg>
<svg class="a" style="left:984px;top:501px" width="18" height="16" viewBox="0 0 18 16"><path d="M0.8 8.3 L5.8 3 H17.4 V13.6 H5.8 Z" fill="#232627"/><path d="M8.6 5.6 L14 11 M14 5.6 L8.6 11" stroke="#fcfcfc" stroke-width="1.5"/></svg>
<div class="btn" style="left:366px;top:572px;width:144px;height:30px"></div>
<div class="t" style="left:372.3px;top:577px">Plain text</div>
<svg class="a" style="left:491.5px;top:579px" width="16" height="16" viewBox="0 0 16 16"><path d="M3.5 6 L8 10.5 L12.5 6" fill="none" stroke="#232627" stroke-width="1.1"/></svg>
<div class="a" style="left:518px;top:574px;width:26px;height:26px;background:#c6c8c9;border-radius:3px"></div>
<svg class="a" style="left:523px;top:579px" width="18" height="16" viewBox="0 0 18 16"><path d="M2.3 12.8 L6.9 2.2 L11.6 12.8 M3.5 10.2 H10.4" fill="none" stroke="#232627" stroke-width="1.15"/><path d="M11.7 2.9 V6.6 M11.7 2.9 H13.2 A0.9 0.9 0 0 1 13.2 4.7 H11.7 M13.2 4.7 A0.95 0.95 0 0 1 13.2 6.6 H11.7" fill="none" stroke="#232627" stroke-width="0.9"/></svg>
<svg class="a" style="left:557px;top:579px" width="16" height="16" viewBox="0 0 16 16"><path d="M2.5 5.2 V2.5 H5.2 M10.8 2.5 H13.5 V5.2 M13.5 10.8 V13.5 H10.8 M5.2 13.5 H2.5 V10.8" fill="none" stroke="#232627" stroke-width="1.1"/><path d="M4.3 4.3 h2.8 v2.8 h-2.8 z M8.9 4.3 h2.8 v2.8 h-2.8 z M4.3 8.9 h2.8 v2.8 h-2.8 z M8.9 8.9 h2.8 v2.8 h-2.8 z" fill="#232627"/></svg>
<svg class="a" style="left:668px;top:579px" width="16" height="16" viewBox="0 0 16 16"><path d="M2.2 5.5 L8 11.3 L13.8 5.5" fill="none" stroke="#232627" stroke-width="1.1"/></svg>
<svg class="a" style="left:702px;top:579px" width="16" height="16" viewBox="0 0 16 16"><path d="M2.2 11 L8 5.2 L13.8 11" fill="none" stroke="#232627" stroke-width="1.1"/></svg>
<div class="btn" style="left:731px;top:571px;width:82px;height:31px"></div>
<div class="t" style="left:748.4px;top:577px">Replace</div>
<div class="btn" style="left:821px;top:571px;width:82px;height:31px"></div>
<div class="t" style="left:829.3px;top:577px">Replace All</div>
<div class="btn" style="left:911px;top:571px;width:82px;height:31px;background:linear-gradient(#93cdeb,#77badd);border-color:#69aed6"></div>
<svg class="a" style="left:919px;top:579px" width="16" height="16" viewBox="0 0 16 16"><circle cx="6.8" cy="6.8" r="4.3" fill="none" stroke="#232627" stroke-width="1.2"/><path d="M10 10 L14 14" stroke="#232627" stroke-width="1.4"/></svg>
<div class="t" style="left:940.5px;top:577px">Find All</div>
<div class="a" style="left:1001px;top:574px;width:26px;height:26px;background:#c6c8c9;border-radius:3px"></div>
<svg class="a" style="left:1006px;top:579px" width="16" height="16" viewBox="0 0 16 16"><path d="M1.5 4.5 H14.5 M1.5 11.5 H14.5" stroke="#232627" stroke-width="1.1"/><circle cx="10.6" cy="4.5" r="1.7" fill="#232627"/><circle cx="5" cy="11.5" r="1.8" fill="#c3c5c6" stroke="#232627" stroke-width="1.1"/></svg>
<svg class="a" style="left:279px;top:611px" width="16" height="16" viewBox="0 0 16 16"><rect width="16" height="16" fill="#3a4345"/><rect y="8" width="16" height="8" fill="#30383a"/><path d="M5.5 4.5 L9 8 L5.5 11.5" fill="none" stroke="#8a9499" stroke-width="1.1"/></svg>
<div class="t" style="left:301.6px;top:609px;letter-spacing:.2px">Terminal</div>
<svg class="a" style="left:367px;top:611px" width="16" height="16" viewBox="0 0 16 16"><circle cx="6.8" cy="6.8" r="4.3" fill="none" stroke="#232627" stroke-width="1.2"/><path d="M10 10 L14 14" stroke="#232627" stroke-width="1.4"/></svg>
<div class="t" style="left:388.9px;top:609px">Search and Replace</div>
<svg class="a" style="left:520px;top:611px" width="16" height="16" viewBox="0 0 16 16"><rect x="2.6" y="2.6" width="10.8" height="10.8" fill="none" stroke="#232627" stroke-width="1.2"/><rect x="2" y="2" width="12" height="3.2" fill="#232627"/><path d="M4.3 8h2M7.6 8h4.2M4.3 11h2M7.6 11h4.2" stroke="#232627" stroke-width="1.5"/></svg>
<div class="t" style="left:542.1px;top:609px;letter-spacing:.15px">Current Project</div>
</div>
</body></html>
